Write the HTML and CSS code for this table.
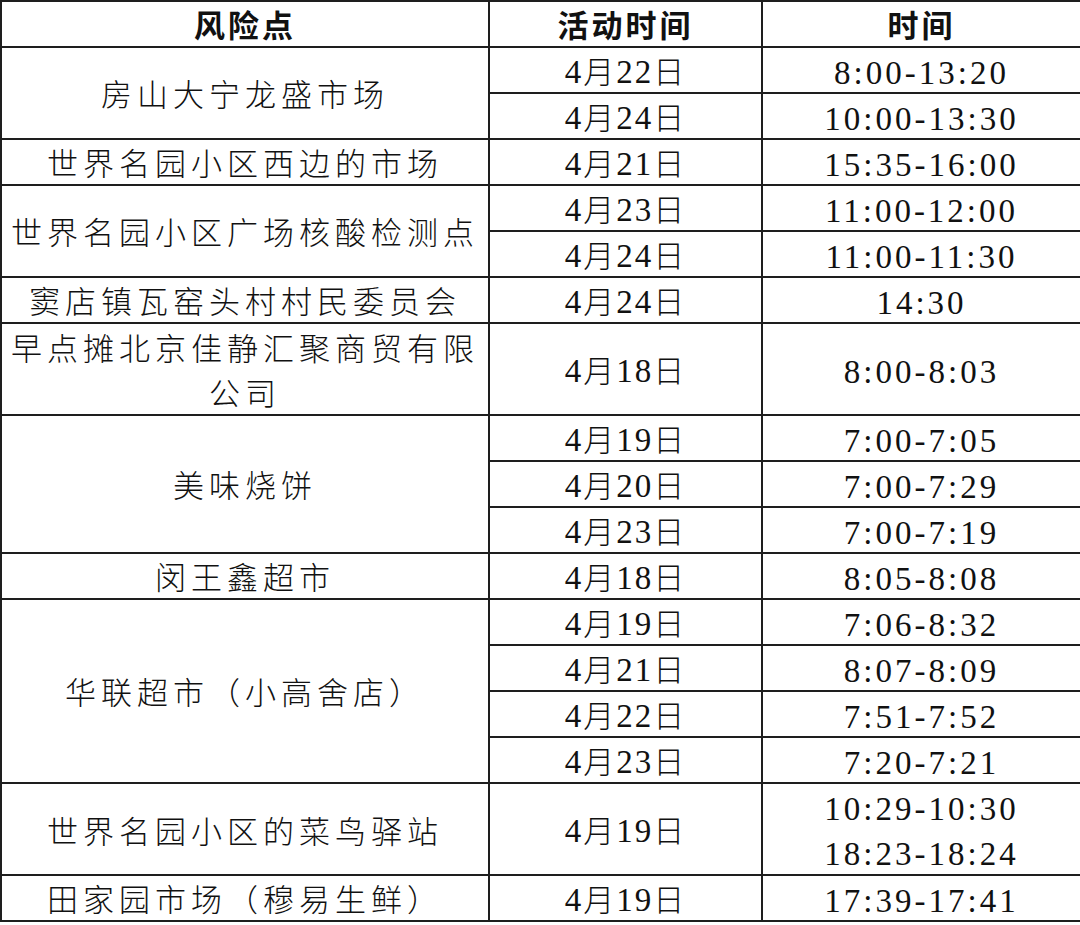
FILE: index.html
```html
<!DOCTYPE html>
<html lang="zh-CN">
<head>
<meta charset="utf-8">
<title>风险点</title>
<link rel="stylesheet" href="styles.css">
</head>
<body>
<table class="risk">
  <colgroup>
    <col class="c-place">
    <col class="c-date">
    <col class="c-time">
  </colgroup>
  <thead>
    <tr><th>风险点</th><th>活动时间</th><th>时间</th></tr>
  </thead>
  <tbody>
    <tr><td class="place" rowspan="2">房山大宁龙盛市场</td><td class="date"><span class="num">4</span>月<span class="num">22</span>日</td><td class="time"><span class="num">8:00-13:20</span></td></tr>
    <tr><td class="date"><span class="num">4</span>月<span class="num">24</span>日</td><td class="time"><span class="num">10:00-13:30</span></td></tr>
    <tr><td class="place">世界名园小区西边的市场</td><td class="date"><span class="num">4</span>月<span class="num">21</span>日</td><td class="time"><span class="num">15:35-16:00</span></td></tr>
    <tr><td class="place" rowspan="2">世界名园小区广场核酸检测点</td><td class="date"><span class="num">4</span>月<span class="num">23</span>日</td><td class="time"><span class="num">11:00-12:00</span></td></tr>
    <tr><td class="date"><span class="num">4</span>月<span class="num">24</span>日</td><td class="time"><span class="num">11:00-11:30</span></td></tr>
    <tr><td class="place">窦店镇瓦窑头村村民委员会</td><td class="date"><span class="num">4</span>月<span class="num">24</span>日</td><td class="time"><span class="num">14:30</span></td></tr>
    <tr class="double"><td class="place">早点摊北京佳静汇聚商贸有限公司</td><td class="date"><span class="num">4</span>月<span class="num">18</span>日</td><td class="time"><span class="num">8:00-8:03</span></td></tr>
    <tr><td class="place" rowspan="3">美味烧饼</td><td class="date"><span class="num">4</span>月<span class="num">19</span>日</td><td class="time"><span class="num">7:00-7:05</span></td></tr>
    <tr><td class="date"><span class="num">4</span>月<span class="num">20</span>日</td><td class="time"><span class="num">7:00-7:29</span></td></tr>
    <tr><td class="date"><span class="num">4</span>月<span class="num">23</span>日</td><td class="time"><span class="num">7:00-7:19</span></td></tr>
    <tr><td class="place">闵王鑫超市</td><td class="date"><span class="num">4</span>月<span class="num">18</span>日</td><td class="time"><span class="num">8:05-8:08</span></td></tr>
    <tr><td class="place" rowspan="4">华联超市（小高舍店）</td><td class="date"><span class="num">4</span>月<span class="num">19</span>日</td><td class="time"><span class="num">7:06-8:32</span></td></tr>
    <tr><td class="date"><span class="num">4</span>月<span class="num">21</span>日</td><td class="time"><span class="num">8:07-8:09</span></td></tr>
    <tr><td class="date"><span class="num">4</span>月<span class="num">22</span>日</td><td class="time"><span class="num">7:51-7:52</span></td></tr>
    <tr><td class="date"><span class="num">4</span>月<span class="num">23</span>日</td><td class="time"><span class="num">7:20-7:21</span></td></tr>
    <tr class="double"><td class="place">世界名园小区的菜鸟驿站</td><td class="date"><span class="num">4</span>月<span class="num">19</span>日</td><td class="time"><span class="num">10:29-10:30</span><br><span class="num">18:23-18:24</span></td></tr>
    <tr><td class="place">田家园市场（穆易生鲜）</td><td class="date"><span class="num">4</span>月<span class="num">19</span>日</td><td class="time"><span class="num">17:39-17:41</span></td></tr>
  </tbody>
</table>
</body>
</html>
```

FILE: styles.css
```css
html, body {
  margin: 0;
  padding: 0;
  background: #ffffff;
}

.risk {
  border-collapse: collapse;
  width: 1080px;
  table-layout: fixed;
  color: #111111;
  font-family: "Noto Sans CJK SC", sans-serif;
}

.c-place { width: 488px; }
.c-date { width: 273px; }
.c-time { width: 319px; }

.risk th,
.risk td {
  border: 2px solid #1e1e1e;
  padding: 0;
  text-align: center;
  vertical-align: middle;
  line-height: 44px;
  white-space: normal;
}

.risk th {
  font-family: "Noto Sans CJK SC", sans-serif;
  font-weight: 700;
  font-size: 31px;
  letter-spacing: 3px;
}

.place {
  font-family: "Noto Sans CJK SC", sans-serif;
  font-weight: 300;
  font-size: 31px;
  letter-spacing: 5px;
}

.date {
  font-family: "Noto Sans CJK SC", sans-serif;
  font-weight: 300;
  font-size: 31px;
  letter-spacing: 2px;
}

.time {
  font-size: 32px;
  letter-spacing: 3px;
}

.num {
  font-family: "Liberation Serif", "Times New Roman", serif;
  font-weight: 400;
  font-size: 33px;
  line-height: 20px;
}

.double .place,
.double .time {
  line-height: 45px;
}
```
